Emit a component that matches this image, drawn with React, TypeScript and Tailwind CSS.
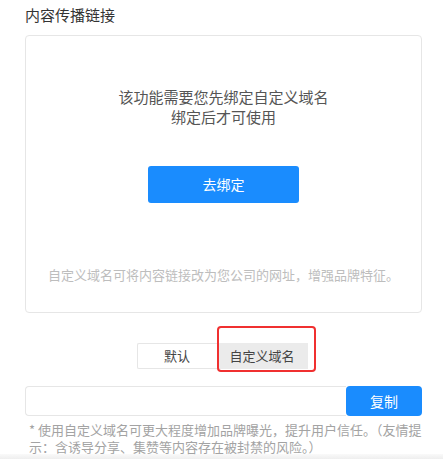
const font = { fontFamily: '"Noto Sans CJK SC", "Noto Sans", sans-serif' };

export default function App() {
  return (
    <div className="w-[443px] h-[460px] overflow-hidden bg-white" style={font}>
      <div className="pl-[25px] pr-[21px] pt-[5px]">
        <h2 className="text-[15px] leading-[20px] text-[#333]">内容传播链接</h2>

        <div className="mt-[10px] h-[278px] rounded-[4px] border border-[#e6e6e6] flex flex-col items-center pt-[51px]">
          <p className="text-[15px] leading-[20px] text-[#555] text-center">
            该功能需要您先绑定自定义域名
            <br />
            绑定后才可使用
          </p>
          <button className="mt-[39px] w-[151px] h-[37px] rounded-[3px] bg-[#1a8cfe] text-white text-[14px]">
            去绑定
          </button>
          <p className="mt-[62px] text-[13px] leading-[20px] text-[#bdbdbd]">
            自定义域名可将内容链接改为您公司的网址，增强品牌特征。
          </p>
        </div>

        <div className="mt-[30px] flex justify-center">
          <div className="flex h-[26px] text-[13px] text-[#444] pr-[3px]">
            <button className="w-[80px] border border-r-0 border-[#e6e6e6] rounded-l-[2px] bg-white">默认</button>
            <div className="relative">
              <button className="w-[91px] h-full bg-[#ebebeb]">自定义域名</button>
              <div className="absolute left-0 -top-[17px] -right-[8px] -bottom-[3px] border-2 border-[#f03030] rounded-[4px]" />
            </div>
          </div>
        </div>

        <div className="mt-[17px] flex h-[30px]">
          <input className="flex-1 min-w-0 border border-r-0 border-[#e6e6e6] rounded-l-[4px] outline-none px-2 text-[13px]" />
          <button className="w-[76px] rounded-[4px] bg-[#1a8cfe] text-white text-[14px]">复制</button>
        </div>

        <p className="mt-[5px] pl-[4px] -mr-[20px] whitespace-nowrap text-[13px] leading-[17px] text-[#a3a3a3]">
          * 使用自定义域名可更大程度增加品牌曝光，提升用户信任。（友情提
          <br />
          示：含诱导分享、集赞等内容存在被封禁的风险。）
        </p>
      </div>
      <div className="-mt-px h-[5px] bg-gradient-to-b from-[#fafafa] to-[#eeeeee]" />
    </div>
  );
}
